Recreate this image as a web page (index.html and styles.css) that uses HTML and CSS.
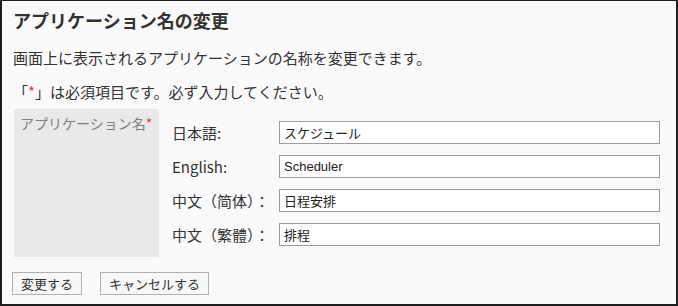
FILE: index.html
```html
<!DOCTYPE html>
<html lang="ja">
<head>
<meta charset="utf-8">
<title>アプリケーション名の変更</title>
<link rel="stylesheet" href="styles.css">
</head>
<body>
<div class="page">
  <h1 class="title">アプリケーション名の変更</h1>
  <p class="desc">画面上に表示されるアプリケーションの名称を変更できます。</p>
  <p class="req">「<span class="star">*</span>」は必須項目です。必ず入力してください。</p>
  <div class="form">
    <div class="form-label">アプリケーション名<span class="star">*</span></div>
    <div class="form-body">
      <label class="row-label">日本語:</label>
      <input class="field" type="text" value="スケジュール">
      <label class="row-label">English:</label>
      <input class="field" type="text" value="Scheduler">
      <label class="row-label">中文（简体）：</label>
      <input class="field" type="text" value="日程安排">
      <label class="row-label">中文（繁體）：</label>
      <input class="field" type="text" value="排程">
    </div>
  </div>
  <div class="actions">
    <button class="btn" type="button">変更する</button>
    <button class="btn" type="button">キャンセルする</button>
  </div>
</div>
</body>
</html>
```

FILE: styles.css
```css
* { box-sizing: border-box; }
html, body { margin: 0; padding: 0; }
body {
  font-family: "Noto Sans CJK JP", "Noto Sans", sans-serif;
  color: #333;
}
.page {
  width: 678px;
  height: 306px;
  border: 2px solid #1e1e1e;
  border-top-width: 1px;
  background: #fafafa;
  padding: 7px 16px 0 11px;
}
.title {
  margin: 0;
  font-size: 18px;
  line-height: 24px;
  font-weight: bold;
  color: #333;
}
.desc {
  margin: 16px 0 0;
  font-size: 15px;
  line-height: 20px;
}
.req {
  margin: 14px 0 0;
  font-size: 15px;
  line-height: 20px;
}
.star { color: #e0413a; }
.form {
  display: flex;
  margin: 7px 0 0 1px;
}
.form-label {
  width: 145px;
  height: 148px;
  background: #e9e9e9;
  color: #808080;
  font-size: 14px;
  line-height: 20px;
  padding: 4px 0 0 6px;
  flex: none;
}
.form-body {
  flex: 1;
  display: grid;
  grid-template-columns: 107px 381px;
  row-gap: 11px;
  align-items: center;
  padding: 12px 0 0 13px;
  align-content: start;
}
.row-label {
  font-size: 15px;
  line-height: 20px;
  color: #333;
}
.field {
  height: 23px;
  width: 381px;
  border: 1px solid #9c9c9c;
  background: #fff;
  padding: 0 4px;
  font-family: "Liberation Sans", "Noto Sans CJK JP", sans-serif;
  font-size: 13px;
  color: #222;
  outline: none;
  margin: 0;
}
.actions {
  display: flex;
  gap: 18px;
  margin: 15px 0 0 -1px;
}
.btn {
  height: 23px;
  padding: 0 8px;
  border: 1px solid #b0b0b0;
  background: #f7f7f7;
  font-family: "Noto Sans CJK JP", sans-serif;
  font-size: 13px;
  line-height: 21px;
  color: #333;
  margin: 0;
}
```
